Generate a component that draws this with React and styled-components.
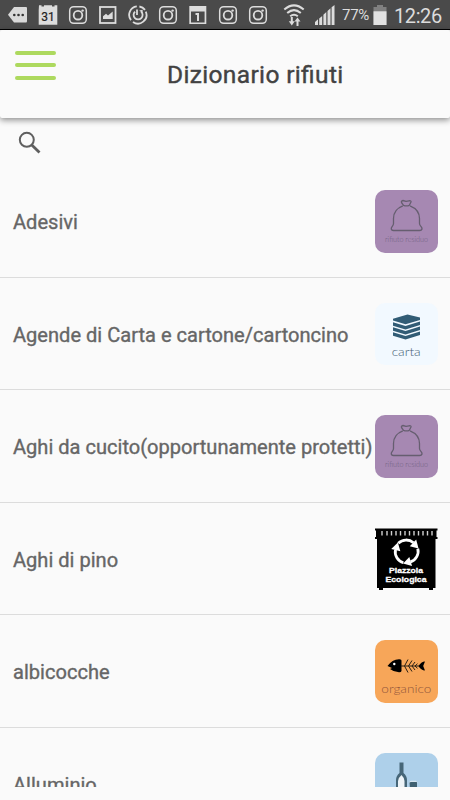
import styled, { createGlobalStyle } from "styled-components";

const GlobalStyle = createGlobalStyle`
    body{
        margin: 0;
        background-color: #fafafa;
        font-family: Roboto, sans-serif;
    }
    *{
        box-sizing: border-box;
    }
`

const MoreIcon = () => (
    <svg width="20" height="20" viewBox="0 0 20 20">
        <path d="M6 2H18Q19 2 19 3V16Q19 17.5 18 17.5H6L0 9.8Z" fill="#d9d9d9" />
        <circle cx="6.3" cy="10" r="1.3" fill="#333" />
        <circle cx="10.5" cy="10" r="1.3" fill="#333" />
        <circle cx="14.7" cy="10" r="1.3" fill="#333" />
    </svg>
)

const CalendarIcon = () => (
    <svg width="20" height="20" viewBox="0 0 20 20">
        <path d="M1 .3H3.5V1.5H6V.3H14V1.5H16.5V.3H19.3V5.2H.7ZM.7 5H19.3V19.7H.7Z" fill="#dcdcdc" />
        <text x="10" y="16.3" textAnchor="middle" fontSize="12" fill="#222" stroke="#222" strokeWidth=".2">31</text>
    </svg>
)

const InstagramIcon = () => (
    <svg width="20" height="20" viewBox="0 0 20 20" fill="none" stroke="#dcdcdc">
        <rect x="1.7" y="1.7" width="16.6" height="16.6" rx="4" strokeWidth="1.5" />
        <circle cx="10" cy="10.2" r="4.3" strokeWidth="1.8" />
        <circle cx="14.6" cy="5.6" r="1.2" fill="#dcdcdc" stroke="none" />
    </svg>
)

const PictureIcon = () => (
    <svg width="20" height="20" viewBox="0 0 20 20">
        <rect x="2" y="2" width="15.5" height="16" fill="none" stroke="#dcdcdc" strokeWidth="1.8" />
        <path d="M5 14V11.2L8 8.7L10 10.5L14.7 6.5V14Z" fill="#dcdcdc" />
    </svg>
)

const SyncIcon = () => (
    <svg width="20" height="20" viewBox="0 0 20 20" fill="none" stroke="#dcdcdc" strokeWidth="1.8">
        <path d="M8.8 1.4A8.5 8.5 0 0 0 3 15.1M5 16.9A8.5 8.5 0 0 0 17.8 6.7M17 4.9A8.5 8.5 0 0 0 11.4 1.5" />
        <path d="M7 6.6A4.5 4.5 0 1 0 13.2 6.6M9 4.5V10" />
        <path d="M11.3 5.6L14.7 4.8L14.5 8.2Z" fill="#dcdcdc" stroke="none" />
    </svg>
)

const DayIcon = () => (
    <svg width="20" height="20" viewBox="0 0 20 20">
        <path d="M1.3 1H18.3V19H1.3ZM3 6.5V17.4H16.6V6.5Z" fill="#dcdcdc" fillRule="evenodd" />
        <path d="M7.5 8H11V16H9V10H7.5Z" fill="#dcdcdc" />
    </svg>
)

const WifiIcon = () => (
    <svg width="22" height="24" viewBox="0 0 22 24" fill="none" stroke="#dcdcdc" strokeWidth="2">
        <path d="M1.3 6.5Q11 -1.8 20.7 6.5M4.2 10Q11 4.2 17.8 10M7.2 13.3Q11 10.2 14.8 13.3" />
        <path d="M8.8 14V19M14.5 23V18" />
        <path d="M5.8 18.3H11.8L8.8 22.5ZM11.5 18.5H17.5L14.5 14.5Z" fill="#dcdcdc" stroke="none" />
    </svg>
)

const SignalIcon = () => (
    <svg width="20" height="20" viewBox="0 0 20 20" fill="#dcdcdc">
        <path d="M0 17L3 14.2V20H0ZM4.2 13.6L7.2 11V20H4.2ZM8.4 9.7L11.3 7V20H8.4ZM12.5 6L15.5 3.3V20H12.5ZM16.6 2.3L19.5 0V20H16.6Z" />
    </svg>
)

const BatteryIcon = () => (
    <svg width="14" height="21" viewBox="0 0 14 21">
        <path d="M4 0H10V2H13.5V20H.5V2H4Z" fill="#808080" />
        <path d="M.5 6.3H13.5V20H.5Z" fill="#e2e2e2" />
    </svg>
)

const SearchIcon = () => (
    <svg width="24" height="24" viewBox="0 0 24 24" fill="none" stroke="#5f5f5f">
        <circle cx="8.8" cy="8.8" r="7" strokeWidth="2" />
        <path d="M13.8 13.9L21.5 21.5" strokeWidth="2.8" />
    </svg>
)

const ResiduoIcon = () => (
    <svg width="63" height="63" viewBox="0 0 63 63" fill="none" stroke="#665e70" strokeWidth="1.3" strokeLinejoin="round">
        <path d="M27.8 15.8C22 18 18.5 22.2 18.5 28.5V33.5C18.5 36 16.3 36.6 16.3 38.5C16.3 40 17.2 40.5 18.5 40.5H44.5C46 40.5 47 40 47 38.5C47 36.6 44.5 36 44.5 33.5V28.5C44.5 22.2 40.5 18 35 15.8" />
        <path d="M28.5 15.3L26.5 12.5Q26 11 28 10.5L31 11.3L34 10.8Q36.5 10.5 36 12L34.3 15.3Q31.5 16.5 28.5 15.3Z" />
        <text x="31.5" y="52" textAnchor="middle" textLength="43" lengthAdjust="spacingAndGlyphs" fontFamily="Lato" fontWeight="300" fontSize="6.8" fill="#6f5f80" stroke="none">rifiuto residuo</text>
    </svg>
)

const CartaIcon = () => (
    <svg width="63" height="63" viewBox="0 0 63 63" fill="#315c75">
        <path d="M18 15.8L32.5 11.5L45 14.6V17L30.5 21.3L18 17.5Z" />
        <path d="M18 19.3L30.5 23.1L45 18.6V22L30.5 26.5L18 22.7ZM18 24.3L30.5 28.1L45 23.6V27L30.5 31.5L18 27.7ZM18 29.3L30.5 33.1L45 28.6V32L30.5 36.5L18 32.7Z" />
        <text x="31.2" y="53" textAnchor="middle" textLength="29" lengthAdjust="spacingAndGlyphs" fontFamily="Lato" fontWeight="300" fontSize="11.5" fill="#456074">carta</text>
    </svg>
)

const PiazzolaIcon = () => (
    <svg width="63" height="63" viewBox="0 0 63 63">
        <path d="M0 .5H62.5V2.5H61.5V9H62.5V11H60.5V60H58V62.5H54V60H8V62.5H4V60H2V11H0V9H1V2.5H0Z" fill="#000" />
        <path d="M7 3V7.5M12 3V7.5M16.5 3V7.5M21 3V7.5M25.5 3V7.5M30 3V7.5M34.5 3V7.5M39 3V7.5M43.5 3V7.5M48 3V7.5M52.5 3V7.5M57 3V7.5" stroke="#d0d0d0" strokeWidth="1.4" />
        {
            [0, 120, 240].map(angle => (
                <g key={angle} transform={`rotate(${angle} 31.5 23.5)`}>
                    <path d="M23.3 15.2A11.2 11.2 0 0 1 38.5 14.8" fill="none" stroke="#fff" strokeWidth="2.8" />
                    <path d="M34.8 18.3L41.2 11.5L43.5 20.5Z" fill="#fff" />
                </g>
            ))
        }
        <g fill="#fff" fontFamily="Liberation Sans, sans-serif" fontSize="8" fontWeight="700" textAnchor="middle" stroke="#fff" strokeWidth=".3">
            <text x="31" y="44.8" textLength="34" lengthAdjust="spacingAndGlyphs">Piazzola</text>
            <text x="31" y="53.8" textLength="41" lengthAdjust="spacingAndGlyphs">Ecologica</text>
        </g>
    </svg>
)

const OrganicoIcon = () => (
    <svg width="63" height="63" viewBox="0 0 63 63">
        <path d="M12.5 26Q17 19.5 24 19.2Q26.8 19 26.5 21.5V31Q26 32.5 24 32.3Q18.5 32 15 29L17 28Z" />
        <circle cx="19.3" cy="24" r="1.2" fill="#fff" />
        <path d="M43.5 26Q46 21.5 50 21.4L48.2 26L50 30.5Q46 30.3 43.5 26Z" />
        <path d="M26 26H44M33 19.5L29.5 26L33 32.5M37 20.5L33.5 26L37 31.5M40 22L37 26L40 30M42.5 23.7L40 26L42.5 28.3" fill="none" stroke="#2b2014" strokeWidth="1" />
        <text x="31.3" y="53.2" textAnchor="middle" textLength="50" lengthAdjust="spacingAndGlyphs" fontFamily="Lato" fontWeight="300" fontSize="12.5" fill="#93573c">organico</text>
    </svg>
)

const AlluminioIcon = () => (
    <svg width="63" height="63" viewBox="0 0 63 63">
        <path d="M24.5 9.5H28.5V20Q32 23 32 27V54H21V27Q21 23 24.5 20Z" fill="#466678" />
        <path d="M26.5 22Q29.5 25 29.5 28V50H23V28Q23 25 26.5 22Z" fill="#eef4f8" />
        <path d="M34.5 29H42V50H36Z" fill="#3f6071" />
        <path d="M34.5 29.3L36 28.3H41L42 29.3" fill="none" stroke="#dfeaf1" strokeWidth="1" />
    </svg>
)

const items = [
    { name: "Adesivi", color: "#a688b2", Icon: ResiduoIcon },
    { name: "Agende di Carta e cartone/cartoncino", color: "#f2f9ff", Icon: CartaIcon },
    { name: "Aghi da cucito(opportunamente protetti)", color: "#a688b2", Icon: ResiduoIcon },
    { name: "Aghi di pino", square: true, Icon: PiazzolaIcon },
    { name: "albicocche", color: "#f7a659", Icon: OrganicoIcon },
    { name: "Alluminio", color: "#aed0ea", Icon: AlluminioIcon },
]

const App = () => {
    return <Screen>
        <GlobalStyle />
        <StatusBar>
            <Notifications>
                <MoreIcon />
                <CalendarIcon />
                <InstagramIcon />
                <PictureIcon />
                <SyncIcon />
                <InstagramIcon />
                <DayIcon />
                <InstagramIcon />
                <InstagramIcon />
            </Notifications>
            <System>
                <WifiIcon />
                <SignalIcon />
                <Percent>77%</Percent>
                <BatteryIcon />
                <Clock>12:26</Clock>
            </System>
        </StatusBar>
        <Header>
            <MenuButton aria-label="Menu">
                <span />
                <span />
                <span />
            </MenuButton>
            <Title>Dizionario rifiuti</Title>
        </Header>
        <SearchBar>
            <SearchIcon />
        </SearchBar>
        <List>
            {
                items.map(({ name, color, square, Icon }) => {
                    return <Row key={name}>
                        <Name>{name}</Name>
                        <Tile $color={color} $square={square}><Icon /></Tile>
                    </Row>
                })
            }
        </List>
    </Screen>
}

const Screen = styled.div`
    display: flex;
    flex-direction: column;
    width: 450px;
    height: 800px;
    padding-bottom: 13px;
    overflow: hidden;
    background-color: #fafafa;
`
const StatusBar = styled.div`
    display: flex;
    flex: none;
    height: 30px;
    background-color: #4a4a4a;
    border-bottom: 1px solid #000;
    svg{
        display: block;
        flex: none;
    }
`
const Notifications = styled.div`
    display: flex;
    gap: 10px;
    padding: 5px 0 0 8px;
`
const System = styled.div`
    display: flex;
    align-items: flex-start;
    padding: 5px 0 0 15px;
    color: #dcdcdc;
    svg:first-child{
        margin: -2px 10px 0 0;
    }
`
const Percent = styled.span`
    width: 31px;
    margin-left: 7px;
    font-size: 15px;
    line-height: 21px;
    letter-spacing: -0.3px;
`
const Clock = styled.span`
    margin-left: 7px;
    font-size: 20px;
    line-height: 22px;
    letter-spacing: -0.4px;
`
const Header = styled.header`
    display: flex;
    flex: none;
    height: 87.5px;
    background-color: #fafafa;
    border-radius: 2px;
    box-shadow: 0 2px 6px rgba(0,0,0,0.45);
`
const MenuButton = styled.button`
    display: flex;
    flex-direction: column;
    gap: 8.5px;
    width: 56px;
    padding: 20.5px 0 0 15px;
    border: 0;
    background: none;
    span{
        height: 4px;
        border-radius: 2px;
        background-color: #add95e;
    }
`
const Title = styled.h1`
    margin: 0 0 0 111px;
    font-size: 24.5px;
    font-weight: 400;
    line-height: 90px;
    letter-spacing: 0.35px;
    font-feature-settings: "liga" 1;
    white-space: nowrap;
    color: #424242;
    -webkit-text-stroke: 0.4px #424242;
`
const SearchBar = styled.div`
    flex: none;
    height: 47.5px;
    padding: 13.5px 0 0 18px;
`
const List = styled.ul`
    flex: 1;
    min-height: 0;
    margin: 0;
    padding: 0;
    overflow: hidden;
    list-style: none;
`
const Row = styled.li`
    display: flex;
    align-items: center;
    justify-content: space-between;
    height: 112.5px;
    padding: 1px 12.5px 0 13px;
    border-bottom: 1px solid #dcdcdc;
`
const Name = styled.span`
    padding-top: 2px;
    font-size: 20.07px;
    line-height: 28px;
    white-space: nowrap;
    color: #666;
    -webkit-text-stroke: 0.35px #666;
`
const Tile = styled.div`
    flex: none;
    width: 62.5px;
    height: 62.5px;
    border-radius: ${props => props.$square ? "0" : "10px"};
    overflow: hidden;
    background-color: ${props => props.$color || "transparent"};
    svg{
        display: block;
    }
`
export default App;
